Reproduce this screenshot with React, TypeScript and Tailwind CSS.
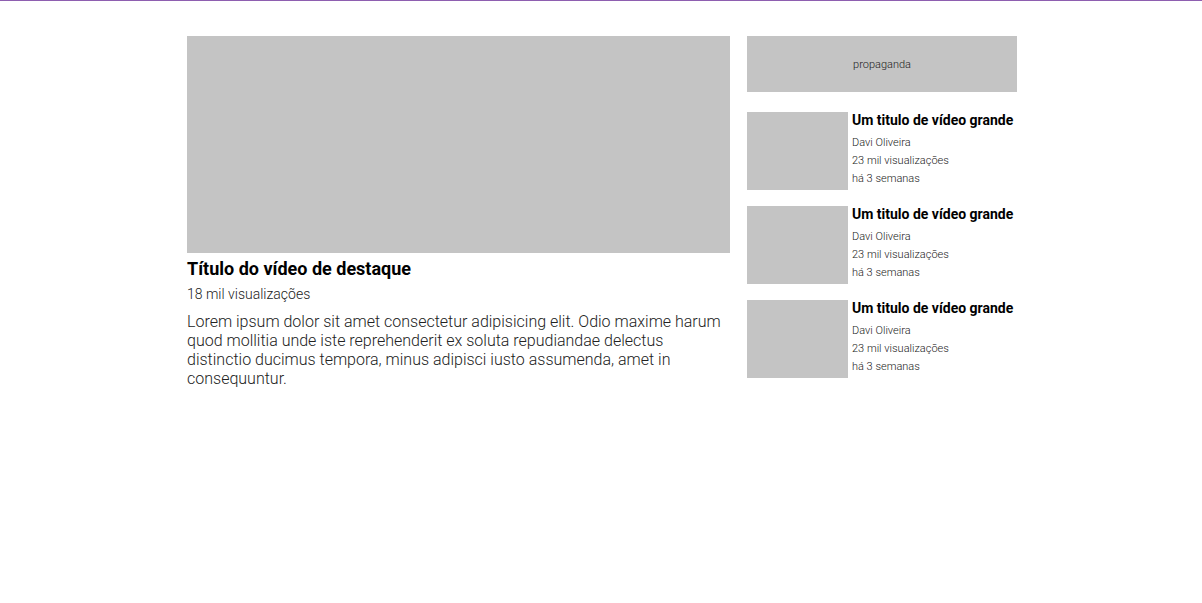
export default function App() {
  const items = [0, 1, 2];
  return (
    <div className="min-h-[603px] bg-white border-t border-[#8e5fb0] pl-[2px]" style={{ fontFamily: "Roboto, 'Liberation Sans', sans-serif" }}>
      <div className="w-[830px] mx-auto mt-[35px] flex gap-[17px]">
        <main className="w-[543px] shrink-0">
          <div className="h-[217px] bg-[#c4c4c4]" />
          <h1 className="mt-[5px] text-[18px] font-bold leading-[21px] text-black">Título do vídeo de destaque</h1>
          <p className="mt-[7px] text-[14px] font-light leading-[16px] text-[#222]">18 mil visualizações</p>
          <p className="mt-[10px] text-[16px] font-light leading-[19px] text-[#222]">
            Lorem ipsum dolor sit amet consectetur adipisicing elit. Odio maxime harum quod mollitia unde iste reprehenderit ex soluta repudiandae delectus distinctio ducimus tempora, minus adipisci iusto assumenda, amet in consequuntur.
          </p>
        </main>
        <aside className="w-[270px] shrink-0">
          <div className="h-[56px] bg-[#c4c4c4] flex items-center justify-center pt-[2px] text-[11px] font-light text-[#222]">propaganda</div>
          <div className="mt-[20px] flex flex-col gap-[16px]">
            {items.map((i) => (
              <div key={i} className="flex">
                <div className="w-[101px] h-[78px] bg-[#c4c4c4] shrink-0" />
                <div className="ml-[4px]">
                  <h2 className="text-[14px] font-bold leading-[16px] text-black whitespace-nowrap">Um titulo de vídeo grande</h2>
                  <div className="mt-[6px] text-[11px] font-light leading-[18px] text-[#222]">
                    <p>Davi Oliveira</p>
                    <p>23 mil visualizações</p>
                    <p>há 3 semanas</p>
                  </div>
                </div>
              </div>
            ))}
          </div>
        </aside>
      </div>
    </div>
  );
}
